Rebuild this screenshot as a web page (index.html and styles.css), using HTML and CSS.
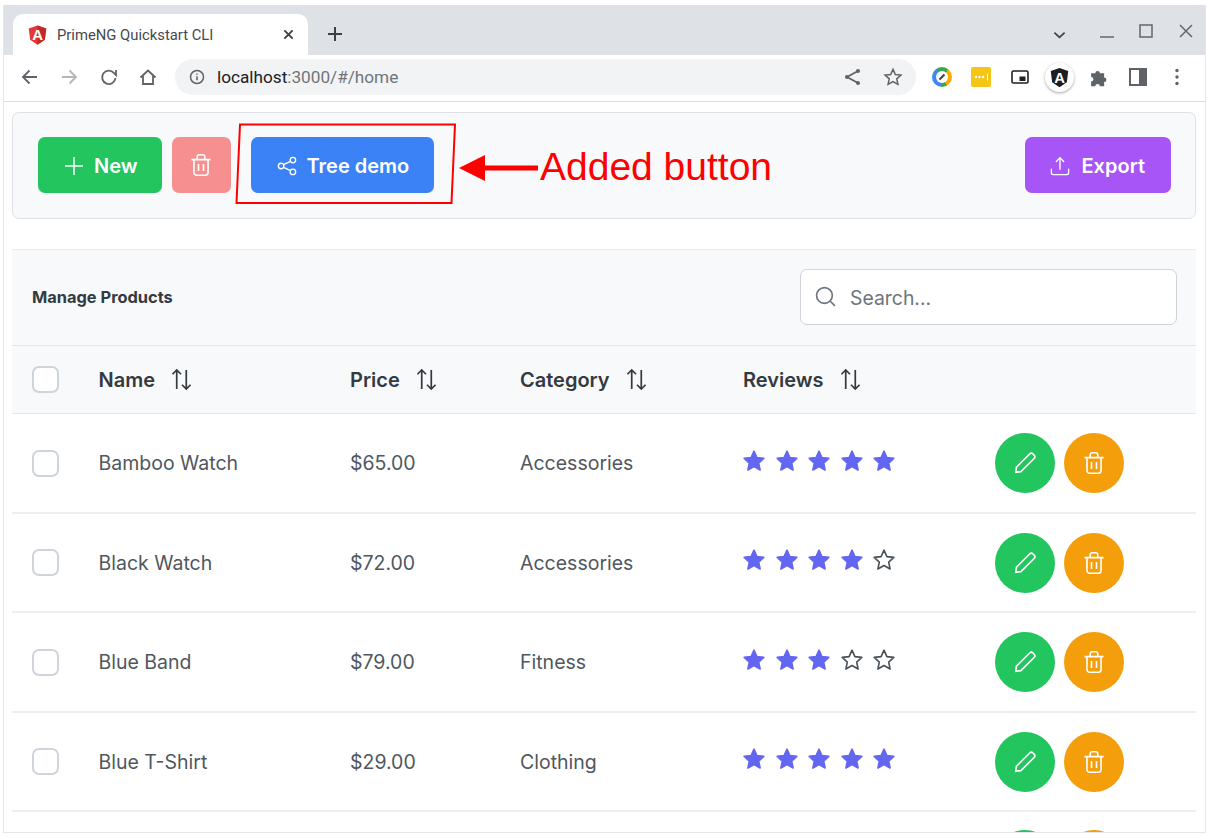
FILE: index.html
```html
<!DOCTYPE html>
<html lang="en">
<head>
    <meta charset="UTF-8">
    <title>PrimeNG Quickstart CLI</title>
    <link rel="stylesheet" href="styles.css">
</head>
<body>
    <svg class="defs" width="0" height="0">
        <symbol id="i-trash" viewBox="0 0 24 24"><path d="M5.500 7v12a2.500 2.500 0 0 0 2.500 2.500h8a2.500 2.500 0 0 0 2.500-2.500V7M3.200 7h17.600M8.500 7V4.500a2 2 0 0 1 2-2h3a2 2 0 0 1 2 2V7M9.700 11v6.500M14.300 11v6.500"/></symbol>
        <symbol id="i-pencil" viewBox="0 0 24 24"><path d="M3.500 20.500l.6-4.600L16.300 3.700a2.200 2.200 0 0 1 3.100 0l1 1a2.200 2.200 0 0 1 0 3.100L8.200 20z"/></symbol>
        <symbol id="i-sort" viewBox="0 0 22 24"><path d="M6 22V2M1.500 6.500L6 2l4.500 4.500M16 2v20M11.500 17.500L16 22l4.500-4.500"/></symbol>
        <symbol id="i-star" viewBox="0 0 24 24"><path d="M12 2.200l2.900 6.400 6.900.8-5.100 4.700 1.400 6.900L12 17.500l-6.100 3.500 1.400-6.900-5.100-4.700 6.900-.8z"/></symbol>
    </svg>

    <div class="browser">
        <div class="tabstrip">
            <div class="tab">
                <svg class="tab-logo" viewBox="0 0 24 24"><path fill="#e53935" d="M12 1L2 4.500l1.600 13L12 23l8.400-5.500 1.600-13z"/><path fill="#c62828" d="M12 1l10 3.500-1.600 13L12 23z"/><text x="12" y="18" text-anchor="middle" class="logo-a">A</text></svg>
                <span class="tab-title">PrimeNG Quickstart CLI</span>
                <svg class="tab-close" viewBox="0 0 12 12"><path d="M1.500 1.500l9 9M10.500 1.500l-9 9"/></svg>
            </div>
            <svg class="new-tab" viewBox="0 0 16 16"><path d="M8 1v14M1 8h14"/></svg>
            <div class="win-controls">
                <svg class="win-chevron" viewBox="0 0 14 8"><path d="M1.500 1.500L7 6.500l5.500-5"/></svg>
                <svg class="win-min" viewBox="0 0 16 16"><path d="M1 14h14"/></svg>
                <svg class="win-max" viewBox="0 0 16 16"><path d="M2 2h12v12H2z"/></svg>
                <svg class="win-close" viewBox="0 0 16 16"><path d="M2 2l12 12M14 2L2 14"/></svg>
            </div>
        </div>

        <div class="toolbar">
            <svg class="nav-icon" viewBox="0 0 20 20"><path d="M17 10H3.500M9.500 3.500L3 10l6.500 6.500"/></svg>
            <svg class="nav-icon disabled" viewBox="0 0 20 20"><path d="M3 10h13.500M10.500 3.500L17 10l-6.500 6.500"/></svg>
            <svg class="nav-icon" viewBox="0 0 20 20"><path d="M16.500 11a6.700 6.700 0 1 1-1.700-5.200L17 8V3"/></svg>
            <svg class="nav-icon" viewBox="0 0 20 20"><path d="M2.500 10.500L10 3.500l7.500 7M5 9v8h10V9"/></svg>
            <div class="omnibox">
                <svg class="info-icon" viewBox="0 0 16 16"><circle cx="8" cy="8" r="6.500"/><path d="M8 7.200v4M8 4.500v1.200"/></svg>
                <span class="url"><b>localhost</b>:3000/#/home</span>
                <svg class="omni-icon" viewBox="0 0 20 20"><circle cx="15" cy="4" r="2" class="solid"/><circle cx="15" cy="16" r="2" class="solid"/><circle cx="4" cy="10" r="2" class="solid"/><path d="M15 4L4 10l11 6"/></svg>
                <svg class="omni-icon" viewBox="0 0 24 24"><path d="M12 2.800l2.800 6.200 6.700.7-5 4.500 1.400 6.600-5.900-3.400-5.900 3.400 1.400-6.600-5-4.500 6.700-.7z"/></svg>
            </div>
            <div class="extensions">
                <div class="ext-ring"><svg viewBox="0 0 12 12"><path d="M3.500 8.500l5-5"/></svg></div>
                <svg class="ext-yellow" viewBox="0 0 20 20"><rect width="20" height="20" rx="2" fill="#f5c518"/><circle cx="5" cy="10" r="1.200"/><circle cx="8.500" cy="10" r="1.200"/><circle cx="12" cy="10" r="1.200"/><rect x="16" y="6.500" width="1" height="7"/></svg>
                <svg class="ext-pip" viewBox="0 0 18 14"><rect x="1" y="1" width="16" height="12" rx="1.500"/><rect x="8.500" y="6.500" width="6" height="4.500" class="fill"/></svg>
                <div class="ext-badge"><svg viewBox="0 0 24 24"><path fill="#1b1f23" d="M12 1L2 4.500l1.600 13L12 23l8.400-5.500 1.600-13z"/><text x="12" y="18" text-anchor="middle" class="logo-a">A</text></svg></div>
                <svg class="ext-puzzle" viewBox="0 0 20 20"><path d="M2 6h4a2.200 2.200 0 1 1 4.400 0h4v4a2.200 2.200 0 1 1 0 4.400v4h-4a2.200 2.200 0 1 0-4.400 0H2v-4.500a2.200 2.200 0 1 0 0-4.400z"/></svg>
                <svg class="ext-panel" viewBox="0 0 18 18"><path d="M1 1h16v16H1z"/><path class="fill" d="M11 1h6v16h-6z"/></svg>
                <svg class="ext-dots" viewBox="0 0 4 18"><circle cx="2" cy="2.500" r="1.700"/><circle cx="2" cy="9" r="1.700"/><circle cx="2" cy="15.500" r="1.700"/></svg>
            </div>
        </div>

        <div class="page">
            <div class="actions-bar">
                <div class="actions-left">
                    <button class="btn btn-new">
                        <svg class="icon" viewBox="0 0 20 20"><path d="M10 1v18M1 10h18"/></svg>New
                    </button>
                    <button class="btn btn-delete">
                        <svg class="icon"><use href="#i-trash"/></svg>
                    </button>
                    <button class="btn btn-tree">
                        <svg class="icon" viewBox="0 0 22 22"><circle cx="17.500" cy="4.500" r="3"/><circle cx="17.500" cy="17.500" r="3"/><circle cx="4.500" cy="11" r="3"/><path d="M7.200 9.600l7.600-3.800M7.200 12.400l7.600 3.800"/></svg>Tree demo
                    </button>
                </div>
                <button class="btn btn-export">
                    <svg class="icon" viewBox="0 0 22 22"><path d="M11 15V2M6.500 6.500L11 2l4.500 4.500M1.500 14v4.500a2 2 0 0 0 2 2h15a2 2 0 0 0 2-2V14"/></svg>Export
                </button>
            </div>

            <div class="products">
                <div class="caption">
                    <h5>Manage Products</h5>
                    <label class="search">
                        <svg viewBox="0 0 20 20"><circle cx="9" cy="9" r="7.500"/><path d="M14.500 14.500L19 19"/></svg>
                        <input type="text" placeholder="Search...">
                    </label>
                </div>

                <div class="row head">
                    <span class="check"></span>
                    <span class="th">Name <svg class="sort"><use href="#i-sort"/></svg></span>
                    <span class="th">Price <svg class="sort"><use href="#i-sort"/></svg></span>
                    <span class="th">Category <svg class="sort"><use href="#i-sort"/></svg></span>
                    <span class="th">Reviews <svg class="sort"><use href="#i-sort"/></svg></span>
                </div>

                <div class="row">
                    <span class="check"></span>
                    <span>Bamboo Watch</span>
                    <span>$65.00</span>
                    <span>Accessories</span>
                    <span class="stars">
                        <svg class="star on"><use href="#i-star"/></svg><svg class="star on"><use href="#i-star"/></svg><svg class="star on"><use href="#i-star"/></svg><svg class="star on"><use href="#i-star"/></svg><svg class="star on"><use href="#i-star"/></svg>
                    </span>
                    <span class="row-actions">
                        <button class="round green"><svg><use href="#i-pencil"/></svg></button>
                        <button class="round orange"><svg><use href="#i-trash"/></svg></button>
                    </span>
                </div>
                <div class="row">
                    <span class="check"></span>
                    <span>Black Watch</span>
                    <span>$72.00</span>
                    <span>Accessories</span>
                    <span class="stars">
                        <svg class="star on"><use href="#i-star"/></svg><svg class="star on"><use href="#i-star"/></svg><svg class="star on"><use href="#i-star"/></svg><svg class="star on"><use href="#i-star"/></svg><svg class="star"><use href="#i-star"/></svg>
                    </span>
                    <span class="row-actions">
                        <button class="round green"><svg><use href="#i-pencil"/></svg></button>
                        <button class="round orange"><svg><use href="#i-trash"/></svg></button>
                    </span>
                </div>
                <div class="row">
                    <span class="check"></span>
                    <span>Blue Band</span>
                    <span>$79.00</span>
                    <span>Fitness</span>
                    <span class="stars">
                        <svg class="star on"><use href="#i-star"/></svg><svg class="star on"><use href="#i-star"/></svg><svg class="star on"><use href="#i-star"/></svg><svg class="star"><use href="#i-star"/></svg><svg class="star"><use href="#i-star"/></svg>
                    </span>
                    <span class="row-actions">
                        <button class="round green"><svg><use href="#i-pencil"/></svg></button>
                        <button class="round orange"><svg><use href="#i-trash"/></svg></button>
                    </span>
                </div>
                <div class="row">
                    <span class="check"></span>
                    <span>Blue T-Shirt</span>
                    <span>$29.00</span>
                    <span>Clothing</span>
                    <span class="stars">
                        <svg class="star on"><use href="#i-star"/></svg><svg class="star on"><use href="#i-star"/></svg><svg class="star on"><use href="#i-star"/></svg><svg class="star on"><use href="#i-star"/></svg><svg class="star on"><use href="#i-star"/></svg>
                    </span>
                    <span class="row-actions">
                        <button class="round green"><svg><use href="#i-pencil"/></svg></button>
                        <button class="round orange"><svg><use href="#i-trash"/></svg></button>
                    </span>
                </div>
                <div class="row cut-off">
                    <span></span><span></span><span></span><span></span><span></span>
                    <span class="row-actions">
                        <button class="round green"></button>
                        <button class="round orange"></button>
                    </span>
                </div>
            </div>
        </div>

        <svg class="annotation" viewBox="0 0 1215 837">
            <path class="frame" d="M240 124.500H455L451.500 203H236.500z"/>
            <path class="arrow" d="M459 168l26-13v10.500h53v5h-53V181z"/>
            <text x="540" y="180" class="note">Added button</text>
        </svg>
    </div>
</body>
</html>
```

FILE: styles.css
```css
* {
    box-sizing: border-box;
}
html, body {
    margin: 0;
    height: 837px;
    overflow: hidden;
    background: #fff;
}
body {
    font-family: Inter, "Liberation Sans", sans-serif;
    font-size: 19.500px;
    color: #50575e;
}
svg {
    display: block;
    flex: none;
    fill: none;
}
.defs {
    position: absolute;
}

/* browser chrome */
.browser {
    margin: 5px 0 0 3px;
    width: 1203px;
    height: 828px;
    border: 1px solid #e6e6e6;
    border-top: 0;
    overflow: hidden;
}
.tabstrip {
    height: 50px;
    padding: 9px 11px 0 9px;
    background: #dee1e6;
    display: flex;
    align-items: flex-start;
}
.tab {
    width: 295px;
    height: 41px;
    padding: 0 14px 0 14px;
    background: #fff;
    border-radius: 10px 10px 0 0;
    display: flex;
    align-items: center;
    font-family: Roboto, sans-serif;
    font-size: 14.800px;
    color: #45494e;
}
.tab-logo {
    width: 21px;
    height: 22px;
    margin-right: 9px;
}
.logo-a {
    font: 700 17px "Liberation Sans", sans-serif;
    fill: #fff;
}
.tab-title {
    flex: 1;
}
.tab-close {
    width: 11px;
    height: 11px;
    stroke: #3c4043;
    stroke-width: 2;
}
.new-tab {
    width: 16px;
    height: 16px;
    margin: 12px 0 0 19px;
    stroke: #3c4043;
    stroke-width: 2;
}
.win-controls {
    margin-left: auto;
    display: flex;
    align-items: center;
    height: 20px;
    margin-top: 7px;
    stroke: #555;
    stroke-width: 1.500;
}
.win-chevron {
    width: 13px;
    height: 8px;
    margin: 7px 33px 0 0;
    stroke: #3c4043;
    stroke-width: 1.800;
}
.win-min, .win-max, .win-close {
    width: 16px;
    height: 16px;
    stroke: #666;
}
.win-min {
    margin-right: 23px;
}
.win-max {
    margin-right: 24px;
}
.toolbar {
    height: 47px;
    padding: 0 0 2px 16px;
    border-bottom: 1px solid #dcdcdc;
    display: flex;
    align-items: center;
}
.nav-icon {
    width: 20px;
    height: 20px;
    margin-right: 19.300px;
    stroke: #5f6368;
    stroke-width: 1.800;
}
.nav-icon.disabled {
    stroke: #b4b6b9;
}
.omnibox {
    width: 741px;
    height: 36px;
    margin-left: -2.200px;
    padding: 0 13px 0 14px;
    background: #f1f3f4;
    border-radius: 18px;
    display: flex;
    align-items: center;
}
.info-icon {
    width: 16px;
    height: 16px;
    margin-right: 12px;
    stroke: #5f6368;
    stroke-width: 1.500;
}
.url {
    flex: 1;
    font-family: Roboto, sans-serif;
    font-size: 17.200px;
    color: #70757a;
}
.url b {
    font-weight: 400;
    color: #202124;
}
.omni-icon {
    width: 20px;
    height: 20px;
    margin-left: 20px;
    stroke: #5f6368;
    stroke-width: 1.800;
}
.omni-icon .solid {
    fill: #5f6368;
    stroke: none;
}
.extensions {
    display: flex;
    align-items: center;
}
.ext-ring {
    width: 20px;
    height: 20px;
    margin-left: 16px;
    padding: 4px;
    border-radius: 50%;
    background: conic-gradient(#34a853 0 40deg, #f9ab00 40deg 150deg, #34a853 150deg 190deg, #4285f4 190deg 330deg, #34a853 330deg);
}
.ext-ring svg {
    width: 12px;
    height: 12px;
    background: #fff;
    border-radius: 50%;
    stroke: #3c4043;
    stroke-width: 2;
}
.ext-yellow {
    width: 20px;
    height: 20px;
    margin-left: 19px;
    fill: #fff;
}
.ext-pip {
    width: 18px;
    height: 14px;
    margin-left: 20px;
    stroke: #202124;
    stroke-width: 1.600;
}
.ext-pip .fill {
    fill: #202124;
    stroke: none;
}
.ext-badge {
    width: 29px;
    height: 29px;
    margin-left: 16px;
    padding: 4px;
    background: #fff;
    border-radius: 50%;
    box-shadow: 0 1px 3px rgba(0, 0, 0, 0.35);
}
.ext-puzzle {
    width: 21px;
    height: 21px;
    margin-left: 15px;
    fill: #5f6368;
}
.ext-panel {
    width: 18px;
    height: 18px;
    margin-left: 19px;
    stroke: #5f6368;
    stroke-width: 2;
}
.ext-panel .fill {
    fill: #5f6368;
}
.ext-dots {
    width: 4px;
    height: 18px;
    margin-left: 28px;
    fill: #5f6368;
}

/* page */
.page {
    padding: 10px 9px 0 8px;
}
.actions-bar {
    height: 107px;
    margin-bottom: 30px;
    padding: 0 24px 2px 25px;
    background: #f8f9fa;
    border: 1px solid #dee2e6;
    border-radius: 7px;
    display: flex;
    align-items: center;
    justify-content: space-between;
}
.actions-left {
    display: flex;
    gap: 10px;
}
.btn {
    height: 56px;
    padding: 2px 25px 0 26px;
    border: 0;
    border-radius: 7px;
    color: #fff;
    font: 600 20px Inter, sans-serif;
    display: flex;
    align-items: center;
    gap: 10px;
}
.icon {
    width: 20px;
    height: 20px;
    stroke: #fff;
    stroke-width: 1.500;
}
.btn-new {
    padding-right: 24px;
    background: #22c55e;
}
.btn-delete {
    width: 59px;
    padding: 0;
    justify-content: center;
    background: #f69090;
}
.btn-delete .icon {
    width: 26px;
    height: 26px;
}
.btn-tree {
    margin-left: 10px;
    background: #3b82f6;
}
.btn-export {
    padding: 2px 26px 0 25px;
    gap: 11px;
    background: #a855f7;
}

.caption {
    height: 96px;
    padding: 0 19px 2px 20px;
    background: #f8f9fa;
    border-top: 1px solid #e9ecef;
    display: flex;
    align-items: center;
    justify-content: space-between;
}
.caption h5 {
    margin: 0;
    font-size: 16.400px;
    font-weight: 700;
    color: #343a40;
}
.search {
    width: 377px;
    height: 56px;
    padding: 0 14px;
    background: #fff;
    border: 1px solid #ced4da;
    border-radius: 7px;
    display: flex;
    align-items: center;
    gap: 14px;
}
.search svg {
    width: 21px;
    height: 21px;
    stroke: #6c757d;
    stroke-width: 1.600;
}
.search input {
    flex: 1;
    min-width: 0;
    padding: 2px 0 0;
    border: 0;
    outline: 0;
    font: 400 19.400px Inter, sans-serif;
    color: #495057;
}
.search input::placeholder {
    color: #6c757d;
}

.row {
    height: 99.500px;
    padding: 1px 0 0 20px;
    border-bottom: 2px solid #eceef1;
    display: grid;
    grid-template-columns: 66.500px 251.500px 170px 223px 252px 1fr;
    align-items: center;
}
.row.head {
    height: 69px;
    padding-top: 0;
    background: #f8f9fa;
    border-top: 1px solid #e3e6ea;
    border-bottom: 1px solid #e3e6ea;
    color: #343a40;
}
.th {
    display: flex;
    align-items: center;
    gap: 16px;
    font-size: 20px;
    font-weight: 600;
}
.sort {
    width: 21px;
    height: 23px;
    stroke: #343a40;
    stroke-width: 1.800;
}
.check {
    width: 27px;
    height: 27px;
    background: #fff;
    border: 2px solid #ced4da;
    border-radius: 7px;
}
.stars {
    display: flex;
    gap: 8.500px;
    margin: 0 0 5px -1px;
}
.star {
    width: 24px;
    height: 24px;
    stroke: #495057;
    stroke-width: 1.600;
    stroke-linejoin: round;
}
.star.on {
    fill: #6366f1;
    stroke: #6366f1;
}
.row-actions {
    display: flex;
    gap: 9px;
}
.cut-off .row-actions {
    margin-bottom: 3px;
}
.round {
    width: 60px;
    height: 60px;
    padding: 0;
    border: 0;
    border-radius: 50%;
    display: flex;
    align-items: center;
    justify-content: center;
}
.round svg {
    width: 26px;
    height: 26px;
    stroke: #fff;
    stroke-width: 1.500;
}
.green {
    background: #22c55e;
}
.orange {
    background: #f59e0b;
}

/* red note drawn on top of the screenshot */
.annotation {
    position: absolute;
    left: 0;
    top: 0;
    width: 1215px;
    height: 837px;
}
.frame {
    stroke: #f00;
    stroke-width: 2;
}
.arrow {
    fill: #f00;
}
.note {
    font: 39px "Liberation Sans", sans-serif;
    fill: #f00;
}
```
